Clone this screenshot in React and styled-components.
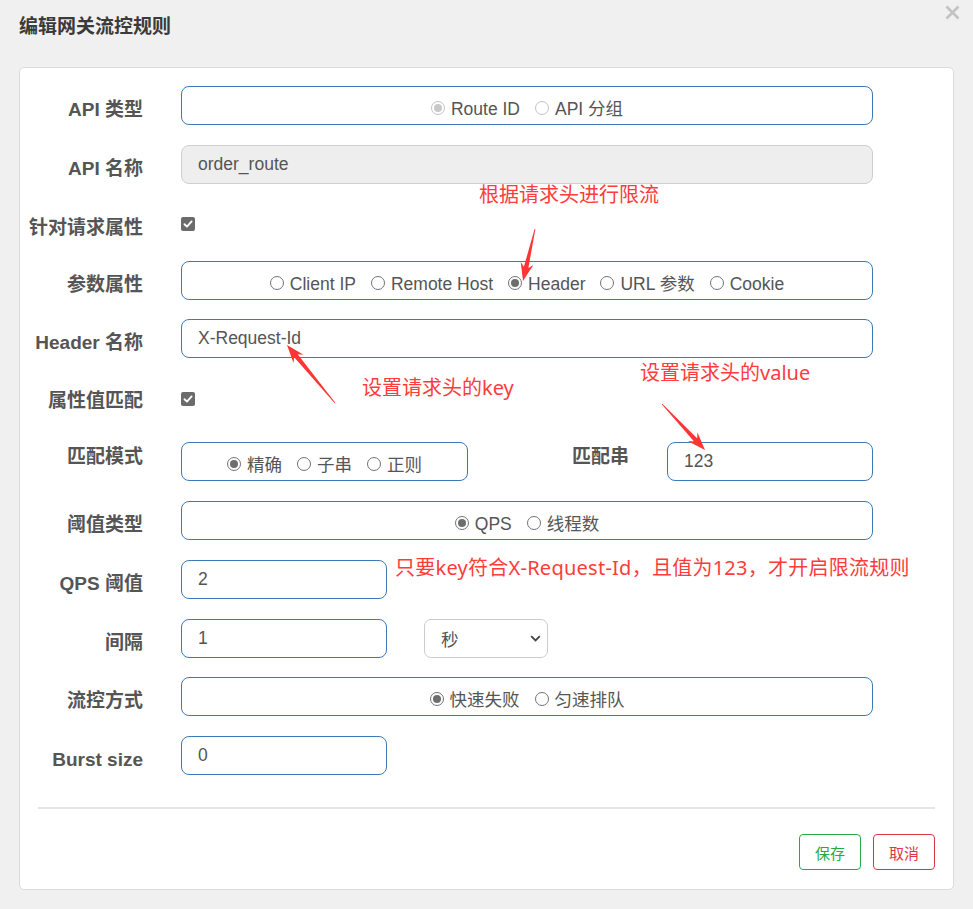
import React from 'react';
import styled, { createGlobalStyle } from 'styled-components';

const GlobalStyle = createGlobalStyle`
  html, body { margin: 0; padding: 0; background: #f0f0f0; }
  body { font-family: "Liberation Sans", "Noto Sans CJK SC", sans-serif; }
  * { box-sizing: border-box; }
`;

const Page = styled.div`
  position: relative;
  width: 973px;
  height: 909px;
  padding: 0 19px;
  overflow: hidden;
`;

const Header = styled.div`
  display: flex;
  justify-content: space-between;
  align-items: flex-start;
  height: 67px;
`;

const Title = styled.h4`
  margin: 0;
  padding-top: 17px;
  font-size: 19px;
  line-height: 20px;
  font-weight: bold;
  color: #3a3a3a;
  font-family: "Liberation Sans", "Noto Sans CJK SC", sans-serif;
`;

const CloseButton = styled.button`
  margin: 5px -6px 0 0;
  padding: 0;
  border: 0;
  background: transparent;
  width: 15px;
  height: 15px;
  display: flex;
  color: #c2c2c2;
`;

const Card = styled.div`
  background: #fff;
  border: 1px solid #dcdcdc;
  border-radius: 5px;
  padding: 18px 0 19px 0;
`;

const Row = styled.div`
  display: flex;
  align-items: center;
  height: ${p => p.$h || 39}px;
  margin-bottom: ${p => (p.$mb === undefined ? 20 : p.$mb)}px;
`;

const Label = styled.div`
  width: ${p => p.$w || 123}px;
  flex-shrink: 0;
  margin-right: 38px;
  text-align: right;
  font-size: 19px;
  line-height: 20px;
  font-weight: bold;
  color: #555;
  white-space: nowrap;
  align-self: flex-start;
  padding-top: ${p => (p.$pt === undefined ? 14 : p.$pt)}px;
`;

const RadioBox = styled.div`
  width: ${p => p.$w || 692}px;
  height: 39px;
  border: 1px solid #3d7ab8;
  border-radius: 8px;
  display: flex;
  justify-content: center;
  align-items: center;
  gap: 15px;
  padding-top: 6px;
`;

const RadioItem = styled.label`
  display: inline-flex;
  align-items: center;
  gap: 6px;
  font-size: 17.5px;
  line-height: 20px;
  color: #555;
  white-space: nowrap;
`;

const RadioDot = styled.span`
  width: 14px;
  height: 14px;
  margin-top: -2px;
  border-radius: 50%;
  border: 1px solid ${p => (p.$disabled ? '#c4c4c4' : '#737373')};
  background: #fff;
  display: inline-flex;
  align-items: center;
  justify-content: center;
  flex-shrink: 0;
  &::after {
    content: '';
    width: 8px;
    height: 8px;
    border-radius: 50%;
    background: ${p => (p.$checked ? (p.$disabled ? '#c8c8c8' : '#6e6e6e') : 'transparent')};
  }
`;

const TextInput = styled.input`
  width: ${p => p.$w || 692}px;
  height: 39px;
  border: 1px solid ${p => (p.disabled ? '#cfcfcf' : '#3d7ab8')};
  background: ${p => (p.disabled ? '#eeeeee' : '#fff')};
  border-radius: 8px;
  padding: 0 16px;
  font-family: "Liberation Sans", "Noto Sans CJK SC", sans-serif;
  font-size: 17.5px;
  color: #555;
  outline: none;
  margin: 0;
`;

const CheckBox = styled.span`
  width: 14px;
  height: 14px;
  border-radius: 2px;
  background: #6b6b6b;
  display: inline-flex;
  align-items: center;
  justify-content: center;
`;

const SelectBox = styled.div`
  width: 124px;
  height: 39px;
  margin-left: 37px;
  border: 1px solid #cccccc;
  border-radius: 7px;
  background: #fff;
  display: flex;
  align-items: center;
  justify-content: space-between;
  padding: 0 6px 0 16px;
  font-size: 17.5px;
  color: #555;
`;

const Divider = styled.div`
  height: 2px;
  background: #e5e5e5;
  margin: 32px 18px 0 18px;
`;

const Footer = styled.div`
  display: flex;
  justify-content: flex-end;
  gap: 12px;
  margin: 25px 18px 0 18px;
`;

const Button = styled.button`
  width: 62px;
  height: 36px;
  border-radius: 4px;
  background: #fff;
  border: 1px solid ${p => p.$color};
  color: ${p => p.$color};
  font-family: "Noto Sans CJK SC", sans-serif;
  font-size: 15px;
  padding: 0;
`;

const Note = styled.div`
  position: absolute;
  left: ${p => p.$x}px;
  top: ${p => p.$y}px;
  font-family: "Noto Sans", "Noto Sans CJK SC", sans-serif;
  font-size: 20px;
  line-height: 20px;
  color: #ff3b3b;
  white-space: nowrap;
  letter-spacing: ${p => p.$ls || 0}px;
`;

const Overlay = styled.svg`
  position: absolute;
  left: 0;
  top: 0;
  pointer-events: none;
`;

function arrowPoints(x1, y1, x2, y2, head = 18, hw = 6.5, nw = 2.3) {
  const dx = x2 - x1;
  const dy = y2 - y1;
  const L = Math.hypot(dx, dy);
  const ux = dx / L;
  const uy = dy / L;
  const nx = -uy;
  const ny = ux;
  const P = (a, b) => [x1 + ux * a + nx * b, y1 + uy * a + ny * b];
  const pts = [
    P(0, -0.4),
    P(0, 0.4),
    P(L - head + 4, nw),
    P(L - head, hw),
    P(L, 0),
    P(L - head, -hw),
    P(L - head + 4, -nw),
  ];
  return pts.map(p => p.map(v => v.toFixed(1)).join(',')).join(' ');
}

const Radio = ({ checked, disabled, children }) => (
  <RadioItem>
    <RadioDot $checked={checked} $disabled={disabled} />
    {children}
  </RadioItem>
);

const Tick = () => (
  <CheckBox>
    <svg width="10" height="10" viewBox="0 0 10 10">
      <path d="M1.5 5.2 L4 7.6 L8.6 2.4" fill="none" stroke="#fff" strokeWidth="1.9" strokeLinecap="round" strokeLinejoin="round" />
    </svg>
  </CheckBox>
);

export default function App() {
  return (
    <>
      <GlobalStyle />
      <Page>
        <Header>
          <Title>编辑网关流控规则</Title>
          <CloseButton aria-label="close">
            <svg width="15" height="15" viewBox="0 0 15 15">
              <path d="M1.5 1.5 L13.5 13.5 M13.5 1.5 L1.5 13.5" stroke="currentColor" strokeWidth="2.6" />
            </svg>
          </CloseButton>
        </Header>
        <Card>
          <Row>
            <Label>API 类型</Label>
            <RadioBox>
              <Radio checked disabled>Route ID</Radio>
              <Radio disabled>API 分组</Radio>
            </RadioBox>
          </Row>
          <Row>
            <Label>API 名称</Label>
            <TextInput disabled value="order_route" readOnly />
          </Row>
          <Row $h={40} $mb={17}>
            <Label>针对请求属性</Label>
            <Tick />
          </Row>
          <Row $mb={19}>
            <Label>参数属性</Label>
            <RadioBox>
              <Radio>Client IP</Radio>
              <Radio>Remote Host</Radio>
              <Radio checked>Header</Radio>
              <Radio>URL 参数</Radio>
              <Radio>Cookie</Radio>
            </RadioBox>
          </Row>
          <Row>
            <Label>Header 名称</Label>
            <TextInput value="X-Request-Id" readOnly />
          </Row>
          <Row $h={41} $mb={23}>
            <Label $pt={13}>属性值匹配</Label>
            <Tick />
          </Row>
          <Row>
            <Label $pt={5}>匹配模式</Label>
            <RadioBox $w={287}>
              <Radio checked>精确</Radio>
              <Radio>子串</Radio>
              <Radio>正则</Radio>
            </RadioBox>
            <Label $pt={5} $w={161}>匹配串</Label>
            <TextInput $w={206} value="123" readOnly />
          </Row>
          <Row>
            <Label>阈值类型</Label>
            <RadioBox>
              <Radio checked>QPS</Radio>
              <Radio>线程数</Radio>
            </RadioBox>
          </Row>
          <Row>
            <Label>QPS 阈值</Label>
            <TextInput $w={206} value="2" readOnly />
          </Row>
          <Row $mb={19}>
            <Label>间隔</Label>
            <TextInput $w={206} value="1" readOnly />
            <SelectBox>
              <span>秒</span>
              <svg width="11" height="7" viewBox="0 0 11 7">
                <path d="M1.2 1.2 L5.5 5.5 L9.8 1.2" fill="none" stroke="#444" strokeWidth="1.8" />
              </svg>
            </SelectBox>
          </Row>
          <Row>
            <Label>流控方式</Label>
            <RadioBox>
              <Radio checked>快速失败</Radio>
              <Radio>匀速排队</Radio>
            </RadioBox>
          </Row>
          <Row $mb={0}>
            <Label>Burst size</Label>
            <TextInput $w={206} value="0" readOnly />
          </Row>
          <Divider />
          <Footer>
            <Button $color="#28a745">保存</Button>
            <Button $color="#dc3545">取消</Button>
          </Footer>
        </Card>

        <Note $x={479} $y={185}>根据请求头进行限流</Note>
        <Note $x={362} $y={378}>设置请求头的key</Note>
        <Note $x={640} $y={363}>设置请求头的value</Note>
        <Note $x={395} $y={558} $ls={0.25}>只要key符合X-Request-Id，且值为123，才开启限流规则</Note>

        <Overlay width="973" height="909" viewBox="0 0 973 909">
          <polygon points={arrowPoints(535, 229, 523, 281)} fill="#ff3434" />
          <polygon points={arrowPoints(335, 403, 287, 345)} fill="#ff3434" />
          <polygon points={arrowPoints(662, 404, 705, 450)} fill="#ff3434" />
        </Overlay>
      </Page>
    </>
  );
}
